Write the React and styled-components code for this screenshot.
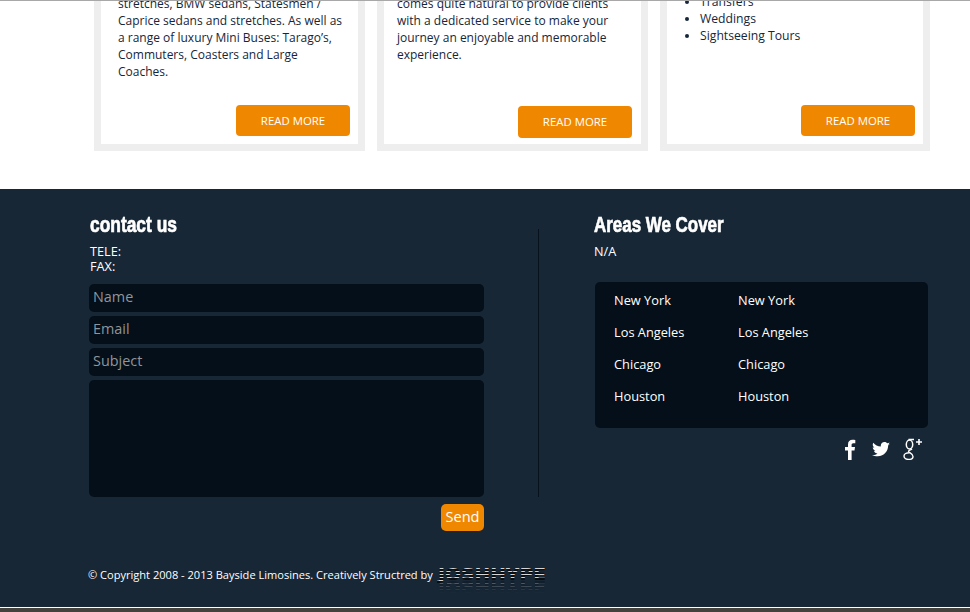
import React from 'react';
import styled, { createGlobalStyle } from 'styled-components';

const GlobalStyle = createGlobalStyle`
  html, body {
    margin: 0;
    padding: 0;
    height: 612px;
    overflow: hidden;
    background: #fff;
    font-family: "Open Sans", "Liberation Sans", sans-serif;
  }
`;

const Page = styled.div`
  width: 970px;
  height: 612px;
  overflow: hidden;
  display: flex;
  flex-direction: column;
`;

const TopLine = styled.div`
  height: 1px;
  background: #a8a8a8;
  position: relative;
  z-index: 2;
  margin-bottom: -1px;
`;

const Cards = styled.section`
  height: 189px;
  display: flex;
  align-items: flex-start;
  gap: 12px;
  padding-left: 94px;
`;

const Card = styled.article`
  box-sizing: border-box;
  width: ${(p) => p.$width}px;
  height: 151px;
  border: 7px solid #eeeeee;
  border-top: 0;
  background: #fff;
  display: flex;
  flex-direction: column;
  justify-content: space-between;
  overflow: hidden;
  padding: 0 ${(p) => p.$padRight}px ${(p) => p.$padBottom}px 0;
`;

const CardText = styled.p`
  margin: -5px 0 0 ${(p) => p.$left}px;
  font-size: 12px;
  line-height: 17px;
  color: #16263a;
  white-space: nowrap;
`;

const CardList = styled.ul`
  margin: -7px 0 0;
  padding: 0 0 0 33px;
  font-size: 12.2px;
  line-height: 17px;
  color: #16263a;
`;

const ListItem = styled.li`
  padding-left: 0;
`;

const ReadMore = styled.a`
  box-sizing: border-box;
  align-self: flex-end;
  width: 114px;
  height: ${(p) => p.$height}px;
  padding-bottom: ${(p) => (p.$height - 31) * 2}px;
  background: #f08700;
  border-radius: 4px;
  color: #fff;
  font-size: 11.4px;
  display: flex;
  align-items: center;
  justify-content: center;
`;

const Footer = styled.footer`
  flex: 1;
  background: #172736;
  border-bottom: 1px solid #fff;
  display: flex;
  flex-direction: column;
  color: #fff;
  position: relative;
`;

const FooterMain = styled.div`
  display: flex;
  height: 342px;
`;

const ContactColumn = styled.div`
  width: 395px;
  margin-left: 89px;
  padding-top: 24px;
`;

const Divider = styled.div`
  width: 1px;
  height: 268px;
  margin: 40px 0 0 54px;
  background: #07121c;
`;

const AreasColumn = styled.div`
  width: 334px;
  margin-left: 55px;
  padding-top: 24px;
`;

const Heading = styled.h2`
  margin: 0 0 0 ${(p) => p.$left}px;
  font-family: "Liberation Sans", Arial, sans-serif;
  font-size: 22px;
  line-height: 24px;
  font-weight: 700;
  color: #fff;
  -webkit-text-stroke: 0.7px #fff;
  transform: scaleX(${(p) => p.$stretch});
  transform-origin: left center;
  white-space: nowrap;
`;

const ContactLine = styled.div`
  margin-left: 1px;
  font-size: 12.7px;
  line-height: 15px;
`;

const ContactLines = styled.div`
  margin-top: 7px;
  margin-bottom: 10px;
`;

const Form = styled.form`
  display: flex;
  flex-direction: column;
  gap: 4px;
`;

const Input = styled.input`
  box-sizing: border-box;
  width: 100%;
  height: 28px;
  padding: 0 4px 4px;
  border: 0;
  border-radius: 5px;
  background: #040f19;
  color: #fff;
  font-family: inherit;
  font-size: 14.4px;
  outline: none;
  &::placeholder {
    color: #8f9599;
    opacity: 1;
  }
`;

const Message = styled.textarea`
  box-sizing: border-box;
  display: block;
  width: 100%;
  height: 117px;
  border: 0;
  border-radius: 5px;
  background: #040f19;
  resize: none;
  outline: none;
`;

const SendRow = styled.div`
  display: flex;
  justify-content: flex-end;
  margin-top: 7px;
`;

const Send = styled.button`
  width: 43px;
  height: 27px;
  padding: 0 0 4px;
  border: 0;
  border-radius: 5px;
  background: #f08700;
  color: #fff;
  font-family: inherit;
  font-size: 14.6px;
`;

const AreaNote = styled.div`
  margin: 7px 0 0 0;
  font-size: 12.7px;
  line-height: 15px;
`;

const AreasPanel = styled.div`
  box-sizing: border-box;
  height: 146px;
  margin-top: 23px;
  margin-left: 1px;
  padding: 2px 0 0 19px;
  border-radius: 5px;
  background: #040f19;
  display: grid;
  grid-template-columns: 124px 124px;
  grid-auto-rows: 32px;
`;

const AreaItem = styled.div`
  font-size: 12.8px;
  line-height: 32px;
  color: #fff;
`;

const Social = styled.div`
  display: flex;
  align-items: center;
  justify-content: flex-end;
  gap: 13px;
  height: 22px;
  margin-top: 10px;
  padding-right: 5px;
`;

const Copyright = styled.div`
  display: flex;
  align-items: center;
  height: 36px;
  padding: 25px 0 0 88px;
  box-sizing: content-box;
  font-size: 11.07px;
`;

const BottomBar = styled.div`
  height: 4px;
  background: #45423e;
`;

const LogoMark = styled.svg`
  margin: 12px 0 0 4px;
  flex: none;
  font-family: "DejaVu Sans", "Liberation Sans", sans-serif;
  font-size: 16px;
  font-weight: 700;
`;

// striped wordmark with a faded copy flipped under it
const Logo = () => (
  <LogoMark width="110" height="26" viewBox="0 0 110 26">
    <defs>
      <pattern id="stripes" width="4" height="3" patternUnits="userSpaceOnUse">
        <rect width="4" height="3" fill="#0a0d10" />
        <rect y="1" width="4" height="1" fill="#d4d4d4" />
      </pattern>
      <linearGradient id="fade" x1="0" y1="0" x2="0" y2="1">
        <stop offset="0" stopColor="#fff" stopOpacity="0.4" />
        <stop offset="1" stopColor="#fff" stopOpacity="0" />
      </linearGradient>
      <mask id="reflect">
        <rect y="13" width="110" height="13" fill="url(#fade)" />
      </mask>
    </defs>
    <text id="joshhype" x="1" y="13" textLength="108" lengthAdjust="spacingAndGlyphs" fill="url(#stripes)">JOSHHYPE</text>
    <g mask="url(#reflect)">
      <use href="#joshhype" transform="matrix(1 0 0 -1 0 27)" />
    </g>
  </LogoMark>
);

const FacebookIcon = () => (
  <svg width="15" height="21" viewBox="0 0 15 21" fill="#fff">
    <path d="M4 21V11.5H1V8h3V5.4C4 2.3 5.8.8 8.5.8c1.3 0 2.4.1 2.8.2v3.2H9.400C7.900 4.200 7.600 4.900 7.600 6v2H11l-.5 3.500H7.600V21z" />
  </svg>
);

const TwitterIcon = () => (
  <svg width="18" height="15" viewBox="0 0 24 20" fill="#fff">
    <path d="M24 2.400c-.9.400-1.800.7-2.800.8 1-.6 1.800-1.600 2.200-2.700-1 .6-2 1-3.100 1.200C19.300.7 18 0 16.600 0c-2.700 0-4.900 2.200-4.900 4.900 0 .4 0 .8.100 1.100C7.700 5.800 4.100 3.900 1.700.9c-.4.700-.7 1.600-.7 2.500 0 1.700.9 3.200 2.200 4.100-.8 0-1.600-.2-2.200-.6v.1c0 2.400 1.700 4.400 3.900 4.800-.4.100-.8.200-1.300.2-.3 0-.6 0-.9-.1.600 2 2.400 3.400 4.600 3.400-1.700 1.300-3.800 2.100-6.100 2.100-.4 0-.8 0-1.200-.1C2.200 18.300 4.800 19.100 7.500 19.100c9.100 0 14-7.500 14-14v-.6c1-.7 1.800-1.500 2.500-2.100z" />
  </svg>
);

const GooglePlusIcon = () => (
  <svg width="20" height="22" viewBox="0 0 20 22" fill="none" stroke="#fff">
    <ellipse cx="6.500" cy="6.500" rx="3.200" ry="4.400" strokeWidth="1.500" />
    <path d="M11 1.500H5.500M9 11c-1 1-3 1-3.500 2.200 0 1.500 4.500 2.200 4.500 5.200 0 2-2 3-4.500 3S1 20 1 18c0-2.200 2.500-3.400 5.500-3.300" strokeWidth="1.400" />
    <path d="M16 1v6M13 4h6" strokeWidth="1.600" />
  </svg>
);

export default function App() {
  return (
    <Page>
      <GlobalStyle />
      <TopLine />
      <Cards>
        <Card $width={271} $padRight={8} $padBottom={8}>
          <CardText $left={17}>
            stretches, BMW sedans, Statesmen /<br />
            Caprice sedans and stretches. As well as<br />
            a range of luxury Mini Buses: Tarago’s,<br />
            Commuters, Coasters and Large<br />
            Coaches.
          </CardText>
          <ReadMore $height={31}>READ MORE</ReadMore>
        </Card>
        <Card $width={271} $padRight={9} $padBottom={6}>
          <CardText $left={13}>
            comes quite natural to provide clients<br />
            with a dedicated service to make your<br />
            journey an enjoyable and memorable<br />
            experience.
          </CardText>
          <ReadMore $height={32}>READ MORE</ReadMore>
        </Card>
        <Card $width={270} $padRight={8} $padBottom={8}>
          <CardList>
            <ListItem>Transfers</ListItem>
            <ListItem>Weddings</ListItem>
            <ListItem>Sightseeing Tours</ListItem>
          </CardList>
          <ReadMore $height={31}>READ MORE</ReadMore>
        </Card>
      </Cards>
      <Footer>
        <FooterMain>
          <ContactColumn>
            <Heading $left={1} $stretch={0.79}>contact us</Heading>
            <ContactLines>
              <ContactLine>TELE:</ContactLine>
              <ContactLine>FAX:</ContactLine>
            </ContactLines>
            <Form>
              <Input placeholder="Name" />
              <Input placeholder="Email" />
              <Input placeholder="Subject" />
              <Message />
            </Form>
            <SendRow>
              <Send type="button">Send</Send>
            </SendRow>
          </ContactColumn>
          <Divider />
          <AreasColumn>
            <Heading $left={0} $stretch={0.77}>Areas We Cover</Heading>
            <AreaNote>N/A</AreaNote>
            <AreasPanel>
              <AreaItem>New York</AreaItem>
              <AreaItem>New York</AreaItem>
              <AreaItem>Los Angeles</AreaItem>
              <AreaItem>Los Angeles</AreaItem>
              <AreaItem>Chicago</AreaItem>
              <AreaItem>Chicago</AreaItem>
              <AreaItem>Houston</AreaItem>
              <AreaItem>Houston</AreaItem>
            </AreasPanel>
            <Social>
              <FacebookIcon />
              <TwitterIcon />
              <GooglePlusIcon />
            </Social>
          </AreasColumn>
        </FooterMain>
        <Copyright>
          © Copyright 2008 - 2013 Bayside Limosines. Creatively Structred by
          <Logo />
        </Copyright>
      </Footer>
      <BottomBar />
    </Page>
  );
}
